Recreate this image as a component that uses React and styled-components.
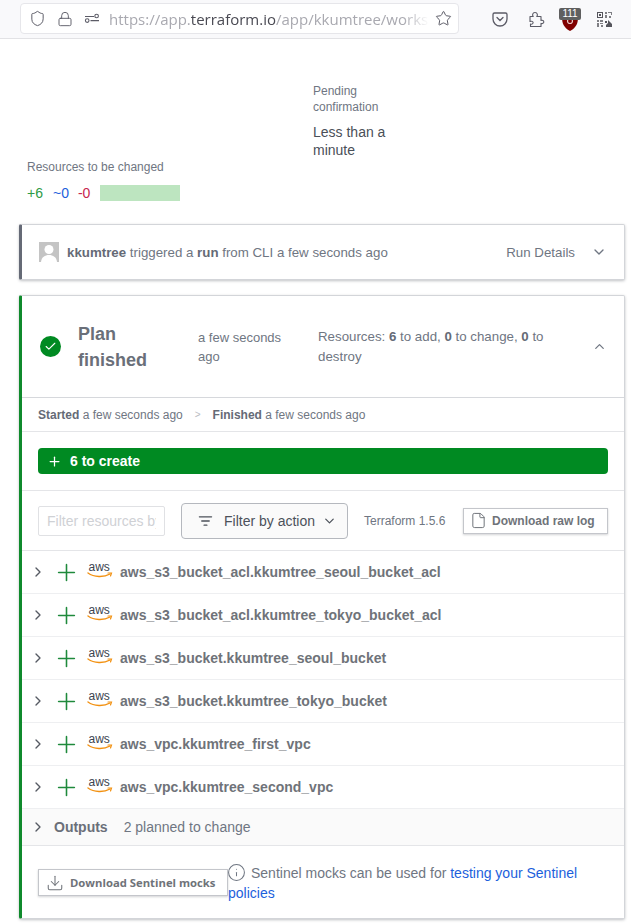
import React from 'react';
import styled, { createGlobalStyle } from 'styled-components';
import { ChevronRight, ChevronDown, ChevronUp, Plus, Check, Download, Info, File, Star, Shield, Lock } from 'lucide-react';

const Global = createGlobalStyle`
  html, body { margin: 0; padding: 0; background: #fff; }
  body { font-family: "Liberation Sans", Arial, sans-serif; color: #6f7682; overflow: hidden; }
  * { box-sizing: border-box; }
`;

const Page = styled.div`
  width: 631px;
  height: 923px;
  overflow: hidden;
`;

const BrowserBar = styled.div`
  height: 39px;
  background: #f9f9fb;
  border-bottom: 1px solid #e2e2e5;
  display: flex;
  align-items: center;
  padding: 0 0 0 20px;
  color: #5b5b66;
`;

const UrlBox = styled.div`
  width: 439px;
  height: 31px;
  margin-top: -1px;
  background: #fff;
  border: 1px solid #e6e6ea;
  border-radius: 4px;
  display: flex;
  align-items: center;
  padding: 0 6px 0 8px;
  flex-shrink: 0;
`;

const UrlIcon = styled.span`
  display: flex;
  margin-left: ${p => p.$gap}px;
`;

const UrlText = styled.div`
  flex: 1;
  margin: 0 6px 0 9px;
  font-family: "Open Sans", "Noto Sans", sans-serif;
  font-size: 15px;
  color: #a9a9b0;
  white-space: nowrap;
  overflow: hidden;
  -webkit-mask-image: linear-gradient(to right, #000 92%, transparent);
  mask-image: linear-gradient(to right, #000 92%, transparent);
  b { font-weight: 400; color: #4a4a53; }
`;

const BarIcons = styled.div`
  display: flex;
  align-items: center;
  margin-left: 33px;
`;

const BarIcon = styled.span`
  display: flex;
  margin-left: ${p => p.$gap}px;
`;

const ShieldBadge = styled.div`
  position: relative;
  width: 16px;
  height: 14px;
  margin: 10px 0 0 17px;
`;

const BadgeCount = styled.span`
  position: absolute;
  top: -9px;
  left: -3px;
  width: 22px;
  height: 12px;
  line-height: 12px;
  background: #5f5f5f;
  border-radius: 2px;
  color: #fff;
  font-size: 10px;
  text-align: center;
`;

const Summary = styled.div`
  display: flex;
  align-items: flex-end;
  height: 163px;
  padding: 44px 0 0 27px;
`;

const ResourcesCol = styled.div`
  width: 286px;
  padding-bottom: 1px;
`;

const PendingCol = styled.div`
  width: 90px;
  padding-bottom: 43px;
`;

const SmallLabel = styled.div`
  font-size: 12px;
  line-height: 16px;
  color: #6f7682;
`;

const Duration = styled.div`
  margin-top: 8px;
  font-size: 14px;
  line-height: 18px;
  color: #4a4f58;
`;

const Counts = styled.div`
  display: flex;
  align-items: center;
  margin-top: 10px;
  height: 16px;
  font-size: 14px;
`;

const Count = styled.span`
  color: ${p => p.$color};
  margin-right: ${p => p.$gap}px;
`;

const ChangeBar = styled.div`
  width: 80px;
  height: 16px;
  background: #bde5c0;
`;

const Card = styled.div`
  margin: ${p => p.$top}px 6px 0 19px;
  background: #fff;
  border: 1px solid #d3d5d9;
  border-left: ${p => p.$borderWidth}px solid ${p => p.$accent};
  border-radius: 2px;
  box-shadow: 0 1px 3px rgba(30, 35, 45, 0.28);
`;

const RunRow = styled.div`
  height: 54px;
  display: flex;
  align-items: center;
  padding: 0 17px 0 17px;
  font-size: 13.3px;
  b { color: #656a76; }
`;

const Avatar = styled.div`
  width: 20px;
  height: 20px;
  margin-right: 8px;
  flex-shrink: 0;
  background: #c4c4c4;
  display: flex;
  overflow: hidden;
`;

const RunText = styled.div`
  flex: 1;
  white-space: nowrap;
`;

const RunDetails = styled.span`
  margin-right: 16px;
`;

const PlanHeader = styled.div`
  height: 102px;
  display: flex;
  align-items: center;
  border-bottom: 1px solid #d6d8dc;
  padding: 0 17px 0 18px;
`;

const StatusDot = styled.div`
  width: 21px;
  height: 21px;
  border-radius: 50%;
  background: #008a22;
  color: #fff;
  display: flex;
  align-items: center;
  justify-content: center;
  flex-shrink: 0;
`;

const PlanTitle = styled.div`
  width: 100px;
  margin: 0 20px 0 17px;
  font-size: 18px;
  font-weight: 700;
  line-height: 26px;
  color: #6a6f79;
`;

const PlanTime = styled.div`
  width: 100px;
  margin-right: 20px;
  font-size: 13px;
  line-height: 19px;
`;

const PlanResources = styled.div`
  flex: 1;
  font-size: 13.3px;
  line-height: 20px;
  padding-right: 30px;
  b { color: #656a76; }
`;

const TimingRow = styled.div`
  height: 34px;
  display: flex;
  align-items: center;
  padding: 0 16px;
  font-size: 12px;
  border-bottom: 1px solid #e4e5e8;
  b { color: #656a76; }
`;

const TimingArrow = styled.span`
  margin: 0 12px;
  color: #b9bcc2;
  font-size: 10px;
`;

const CreateWrap = styled.div`
  height: 59px;
  padding: 16px 16px 0;
  border-bottom: 1px solid #e4e5e8;
`;

const CreateBar = styled.div`
  height: 26px;
  background: #008a22;
  border-radius: 4px;
  display: flex;
  align-items: center;
  padding-left: 9px;
  gap: 8px;
  color: #fff;
  font-size: 14px;
  font-weight: 700;
`;

const FilterRow = styled.div`
  height: 60px;
  display: flex;
  align-items: center;
  padding: 0 16px;
  border-bottom: 1px solid #e4e5e8;
`;

const FilterInput = styled.input`
  width: 127px;
  height: 30px;
  padding: 0 8px;
  border: 1px solid #e0e1e4;
  border-radius: 2px;
  font-family: inherit;
  font-size: 14px;
  outline: none;
  &::placeholder { color: #cfd1d5; opacity: 1; }
`;

const FilterButton = styled.div`
  width: 167px;
  height: 36px;
  margin-left: 16px;
  padding: 0 10px 0 16px;
  display: flex;
  align-items: center;
  background: #fafafa;
  border: 1px solid #b5b8be;
  border-radius: 4px;
  color: #4c515a;
  font-size: 14px;
`;

const FilterLabel = styled.span`
  margin: 0 7px 0 11px;
  white-space: nowrap;
`;

const Version = styled.span`
  margin-left: 16px;
  font-size: 12px;
  white-space: nowrap;
`;

const RawLogButton = styled.div`
  margin-left: auto;
  width: 145px;
  height: 26px;
  display: flex;
  align-items: center;
  padding-left: 6px;
  gap: 5px;
  background: #fff;
  border: 1px solid #c4c6cb;
  box-shadow: 0 1px 2px rgba(30, 35, 45, 0.2);
  font-size: 12px;
  font-weight: 700;
  color: #6f7379;
  white-space: nowrap;
`;

const ResourceRow = styled.div`
  height: 43px;
  display: flex;
  align-items: center;
  padding-left: 8px;
  border-bottom: 1px solid #eeeff1;
  font-size: 14px;
  font-weight: 700;
  color: #6f7379;
`;

const GreenPlus = styled.span`
  display: flex;
  margin: 0 7px 0 7px;
  color: #1f8a3c;
`;

const AwsMark = styled.svg`
  width: 26px;
  height: 17px;
  margin-right: 7px;
  margin-top: -3px;
  flex-shrink: 0;
`;

const AwsWord = styled.text`
  font-family: "Liberation Sans", sans-serif;
  font-size: 12px;
  font-weight: 400;
  fill: #3c4450;
`;

const OutputsRow = styled.div`
  height: 37px;
  display: flex;
  align-items: center;
  padding-left: 8px;
  background: #fafafa;
  border-bottom: 1px solid #e4e5e8;
  font-size: 14px;
`;

const OutputsName = styled.b`
  margin: 0 16px 0 8px;
  color: #6a6f79;
`;

const Footer = styled.div`
  height: 72px;
  display: flex;
  align-items: flex-start;
  padding: 17px 30px 0 16px;
`;

const SentinelButton = styled.div`
  width: 190px;
  height: 27px;
  margin-top: 6px;
  flex-shrink: 0;
  display: flex;
  align-items: center;
  padding-left: 7px;
  gap: 6px;
  background: #fff;
  border: 1px solid #c4c6cb;
  box-shadow: 0 1px 2px rgba(30, 35, 45, 0.2);
  font-family: "Open Sans", "Noto Sans", sans-serif;
  font-size: 11.3px;
  font-weight: 700;
  color: #6f7379;
  white-space: nowrap;
`;

const SentinelNote = styled.div`
  font-size: 14px;
  line-height: 20px;
  svg { vertical-align: -4px; margin: 0 5px 0 -1px; }
  a { color: #1c5fdc; text-decoration: none; }
`;

const resources = [
  'aws_s3_bucket_acl.kkumtree_seoul_bucket_acl',
  'aws_s3_bucket_acl.kkumtree_tokyo_bucket_acl',
  'aws_s3_bucket.kkumtree_seoul_bucket',
  'aws_s3_bucket.kkumtree_tokyo_bucket',
  'aws_vpc.kkumtree_first_vpc',
  'aws_vpc.kkumtree_second_vpc',
];

const AwsLogo = () => (
  <AwsMark viewBox="0 0 26 17">
    <AwsWord x="1.5" y="9">aws</AwsWord>
    <path d="M1 11c6 4.5 16 4.5 22 1" fill="none" stroke="#f29111" strokeWidth="1.4" strokeLinecap="round" />
    <path d="M21 11h3.5l-1 3" fill="none" stroke="#f29111" strokeWidth="1.2" strokeLinecap="round" />
  </AwsMark>
);

const Permissions = () => (
  <svg width="16" height="16" viewBox="0 0 16 16" fill="none" stroke="currentColor" strokeWidth="1.1">
    <circle cx="3.2" cy="9.6" r="1.8" />
    <path d="M6.5 9.6H15M1 5.5h9" />
    <circle cx="12.6" cy="5" r="1.8" />
  </svg>
);

const Pocket = () => (
  <svg width="16" height="16" viewBox="0 0 16 16" fill="none" stroke="currentColor" strokeWidth="1.3">
    <path d="M2.5 2h11A1.5 1.5 0 0 1 15 3.5V8A7 7 0 0 1 1 8V3.5A1.5 1.5 0 0 1 2.5 2z" />
    <path d="M5 6.5l3 3 3-3" strokeLinecap="round" />
  </svg>
);

const Puzzle = () => (
  <svg width="18" height="18" viewBox="0 0 18 18" fill="none" stroke="currentColor" strokeWidth="1.1" strokeLinejoin="round">
    <path d="M3 6.5h3.2c-1-1-.9-4 1.8-4s2.8 3 1.8 4H14v4c1.4-.6 2.8.2 2.8 1.4S15.4 14 14 13.4V16.5H3.5V14c1.6.6 2.6-.4 2.6-1.4S5 10.7 3 11.5z" />
  </svg>
);

const UBlock = () => (
  <svg width="16" height="14" viewBox="0 0 16 14">
    <path d="M0 0h16c0 6-1.5 10.5-8 14C1.5 10.5 0 6 0 0z" fill="#800000" />
    <circle cx="8" cy="4" r="2.5" fill="none" stroke="#e9caca" strokeWidth="1.2" />
  </svg>
);

const QrCode = () => (
  <svg width="15" height="15" viewBox="0 0 15 15" fill="#55555c">
    <path d="M0 0h6v6H0zM1 1v4h4V1zM2 2h2v2H2z" fillRule="evenodd" />
    <path d="M8 0h2v2H8zM11 0h4v3h-1V1h-3zM8 3h2v3H8zM12 4h2v2h-2zM0 8h2v2H0zM3 8h3v2H3zM0 11h2v4H0zM3 11h3v1H3zM4 13h2v2H4z" opacity="0.75" />
    <path d="M8 9h2v2H8zM11 8l4 4v3H9v-2l2-2z" />
  </svg>
);

const FilterLines = () => (
  <svg width="16" height="16" viewBox="0 0 16 16" fill="none" stroke="currentColor" strokeWidth="1.4" strokeLinecap="round">
    <path d="M1.5 3.5h13M4 8h8M6.5 12.5h3" />
  </svg>
);

const AvatarFigure = () => (
  <svg width="20" height="20" viewBox="0 0 20 20">
    <circle cx="10" cy="7.5" r="4.5" fill="#fff" />
    <path d="M2 20c.5-5 4-7 8-7s7.5 2 8 7z" fill="#fff" />
  </svg>
);

const App = () => (
  <Page>
    <Global />
    <BrowserBar>
      <UrlBox>
        <Shield size={17} strokeWidth={1.4} />
        <UrlIcon $gap={11}><Lock size={16} strokeWidth={1.4} /></UrlIcon>
        <UrlIcon $gap={11}><Permissions /></UrlIcon>
        <UrlText>https://app.<b>terraform.io</b>/app/kkumtree/workspaces</UrlText>
        <Star size={17} strokeWidth={1.4} />
      </UrlBox>
      <BarIcons>
        <BarIcon $gap={0}><Pocket /></BarIcon>
        <BarIcon $gap={19}><Puzzle /></BarIcon>
        <ShieldBadge>
          <UBlock />
          <BadgeCount>111</BadgeCount>
        </ShieldBadge>
        <BarIcon $gap={19}><QrCode /></BarIcon>
      </BarIcons>
    </BrowserBar>

    <Summary>
      <ResourcesCol>
        <SmallLabel>Resources to be changed</SmallLabel>
        <Counts>
          <Count $color="#2d9a46" $gap={10}>+6</Count>
          <Count $color="#1c5fdc" $gap={9}>~0</Count>
          <Count $color="#c7254e" $gap={10}>-0</Count>
          <ChangeBar />
        </Counts>
      </ResourcesCol>
      <PendingCol>
        <SmallLabel>Pending confirmation</SmallLabel>
        <Duration>Less than a minute</Duration>
      </PendingCol>
    </Summary>

    <Card $top={22} $accent="#656a76" $borderWidth={3}>
      <RunRow>
        <Avatar><AvatarFigure /></Avatar>
        <RunText><b>kkumtree</b> triggered a <b>run</b> from CLI a few seconds ago</RunText>
        <RunDetails>Run Details</RunDetails>
        <ChevronDown size={16} />
      </RunRow>
    </Card>

    <Card $top={15} $accent="#0f8a2c" $borderWidth={3}>
      <PlanHeader>
        <StatusDot><Check size={13} strokeWidth={2} /></StatusDot>
        <PlanTitle>Plan finished</PlanTitle>
        <PlanTime>a few seconds ago</PlanTime>
        <PlanResources>Resources: <b>6</b> to add, <b>0</b> to change, <b>0</b> to destroy</PlanResources>
        <ChevronUp size={15} />
      </PlanHeader>
      <TimingRow>
        <span><b>Started</b> a few seconds ago</span>
        <TimingArrow>&gt;</TimingArrow>
        <span><b>Finished</b> a few seconds ago</span>
      </TimingRow>
      <CreateWrap>
        <CreateBar><Plus size={15} strokeWidth={2} />6 to create</CreateBar>
      </CreateWrap>
      <FilterRow>
        <FilterInput placeholder="Filter resources by address" />
        <FilterButton>
          <FilterLines />
          <FilterLabel>Filter by action</FilterLabel>
          <ChevronDown size={16} />
        </FilterButton>
        <Version>Terraform 1.5.6</Version>
        <RawLogButton><File size={17} strokeWidth={1.4} />Download raw log</RawLogButton>
      </FilterRow>
      {resources.map(name => (
        <ResourceRow key={name}>
          <ChevronRight size={16} color="#555a63" />
          <GreenPlus><Plus size={27} strokeWidth={1.4} /></GreenPlus>
          <AwsLogo />
          {name}
        </ResourceRow>
      ))}
      <OutputsRow>
        <ChevronRight size={16} color="#555a63" />
        <OutputsName>Outputs</OutputsName>
        2 planned to change
      </OutputsRow>
      <Footer>
        <SentinelButton><Download size={18} strokeWidth={1.4} />Download Sentinel mocks</SentinelButton>
        <SentinelNote>
          <Info size={19} strokeWidth={1.3} />
          Sentinel mocks can be used for <a href="#testing">testing your Sentinel policies</a>
        </SentinelNote>
      </Footer>
    </Card>
  </Page>
);

export default App;
